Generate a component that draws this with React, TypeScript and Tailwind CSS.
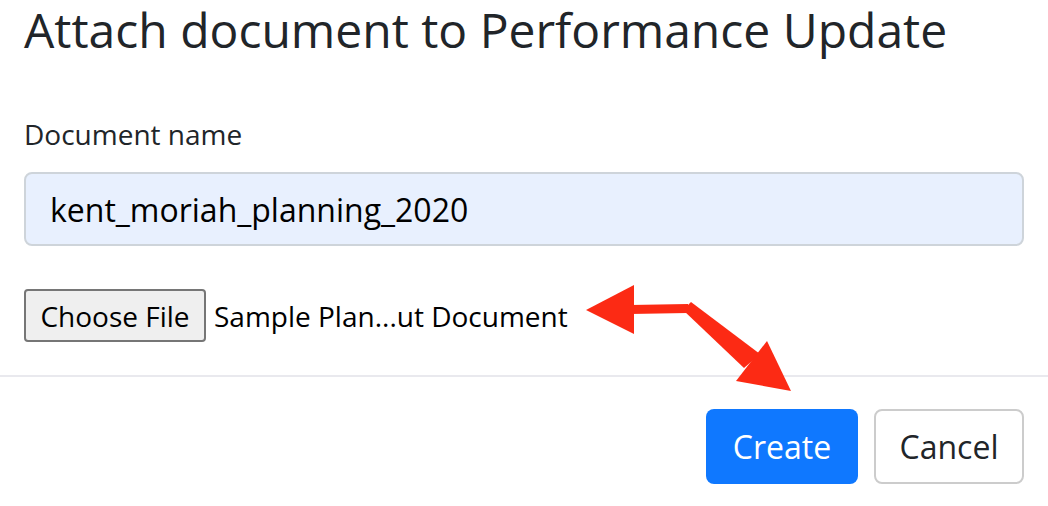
import React, { useState } from 'react';

function Arrows() {
  return (
    <svg
      className="absolute left-0 top-0 pointer-events-none"
      width={1048}
      height={506}
      viewBox="0 0 1048 506"
    >
      <g fill="#fc2a14">
        <polygon points="586,310 634,285 634,334" />
        <polygon points="630,305 688,304 688,313 630,314" />
        <polygon points="683,310 691,302 760,354 744,368" />
        <polygon points="791,391 736,381 767,341" />
      </g>
    </svg>
  );
}

export default function App() {
  const [name, setName] = useState('kent_moriah_planning_2020');

  return (
    <div
      className="relative w-[1048px] h-[506px] bg-white overflow-hidden text-[#212529]"
      style={{ fontFamily: '"Open Sans", "Noto Sans", sans-serif' }}
    >
      <div className="px-6">
        <h2 className="text-[48px] leading-[1.26] font-normal whitespace-nowrap">
          Attach document to Performance Update
        </h2>

        <label htmlFor="docname" className="block mt-[53px] text-[28px] leading-[1.5]">
          Document name
        </label>
        <input
          id="docname"
          type="text"
          value={name}
          onChange={(e) => setName(e.target.value)}
          className="mt-[17px] block w-full h-[74px] px-[24px] rounded-lg border-2 border-[#ced4da] bg-[#e8f0fe] text-[32px] text-black focus:outline-none"
        />

        <div className="mt-[43px] flex items-center">
          <button className="h-[53px] w-[182px] rounded-[4px] border-2 border-[#767676] bg-[#efefef] text-[28px] text-black">
            Choose File
          </button>
          <span className="ml-[8px] text-[28px] text-black">Sample Plan...ut Document</span>
        </div>
      </div>

      <div className="mt-[33px] h-[2px] bg-[#e9e9ee]" />

      <div className="mt-[32px] px-6 flex justify-end gap-4">
        <button className="h-[75px] w-[152px] rounded-lg bg-[#0f78ff] text-white text-[32px]">
          Create
        </button>
        <button className="h-[75px] w-[150px] rounded-lg border-2 border-[#cccccc] bg-white text-[32px] text-[#212529]">
          Cancel
        </button>
      </div>

      <Arrows />
    </div>
  );
}
